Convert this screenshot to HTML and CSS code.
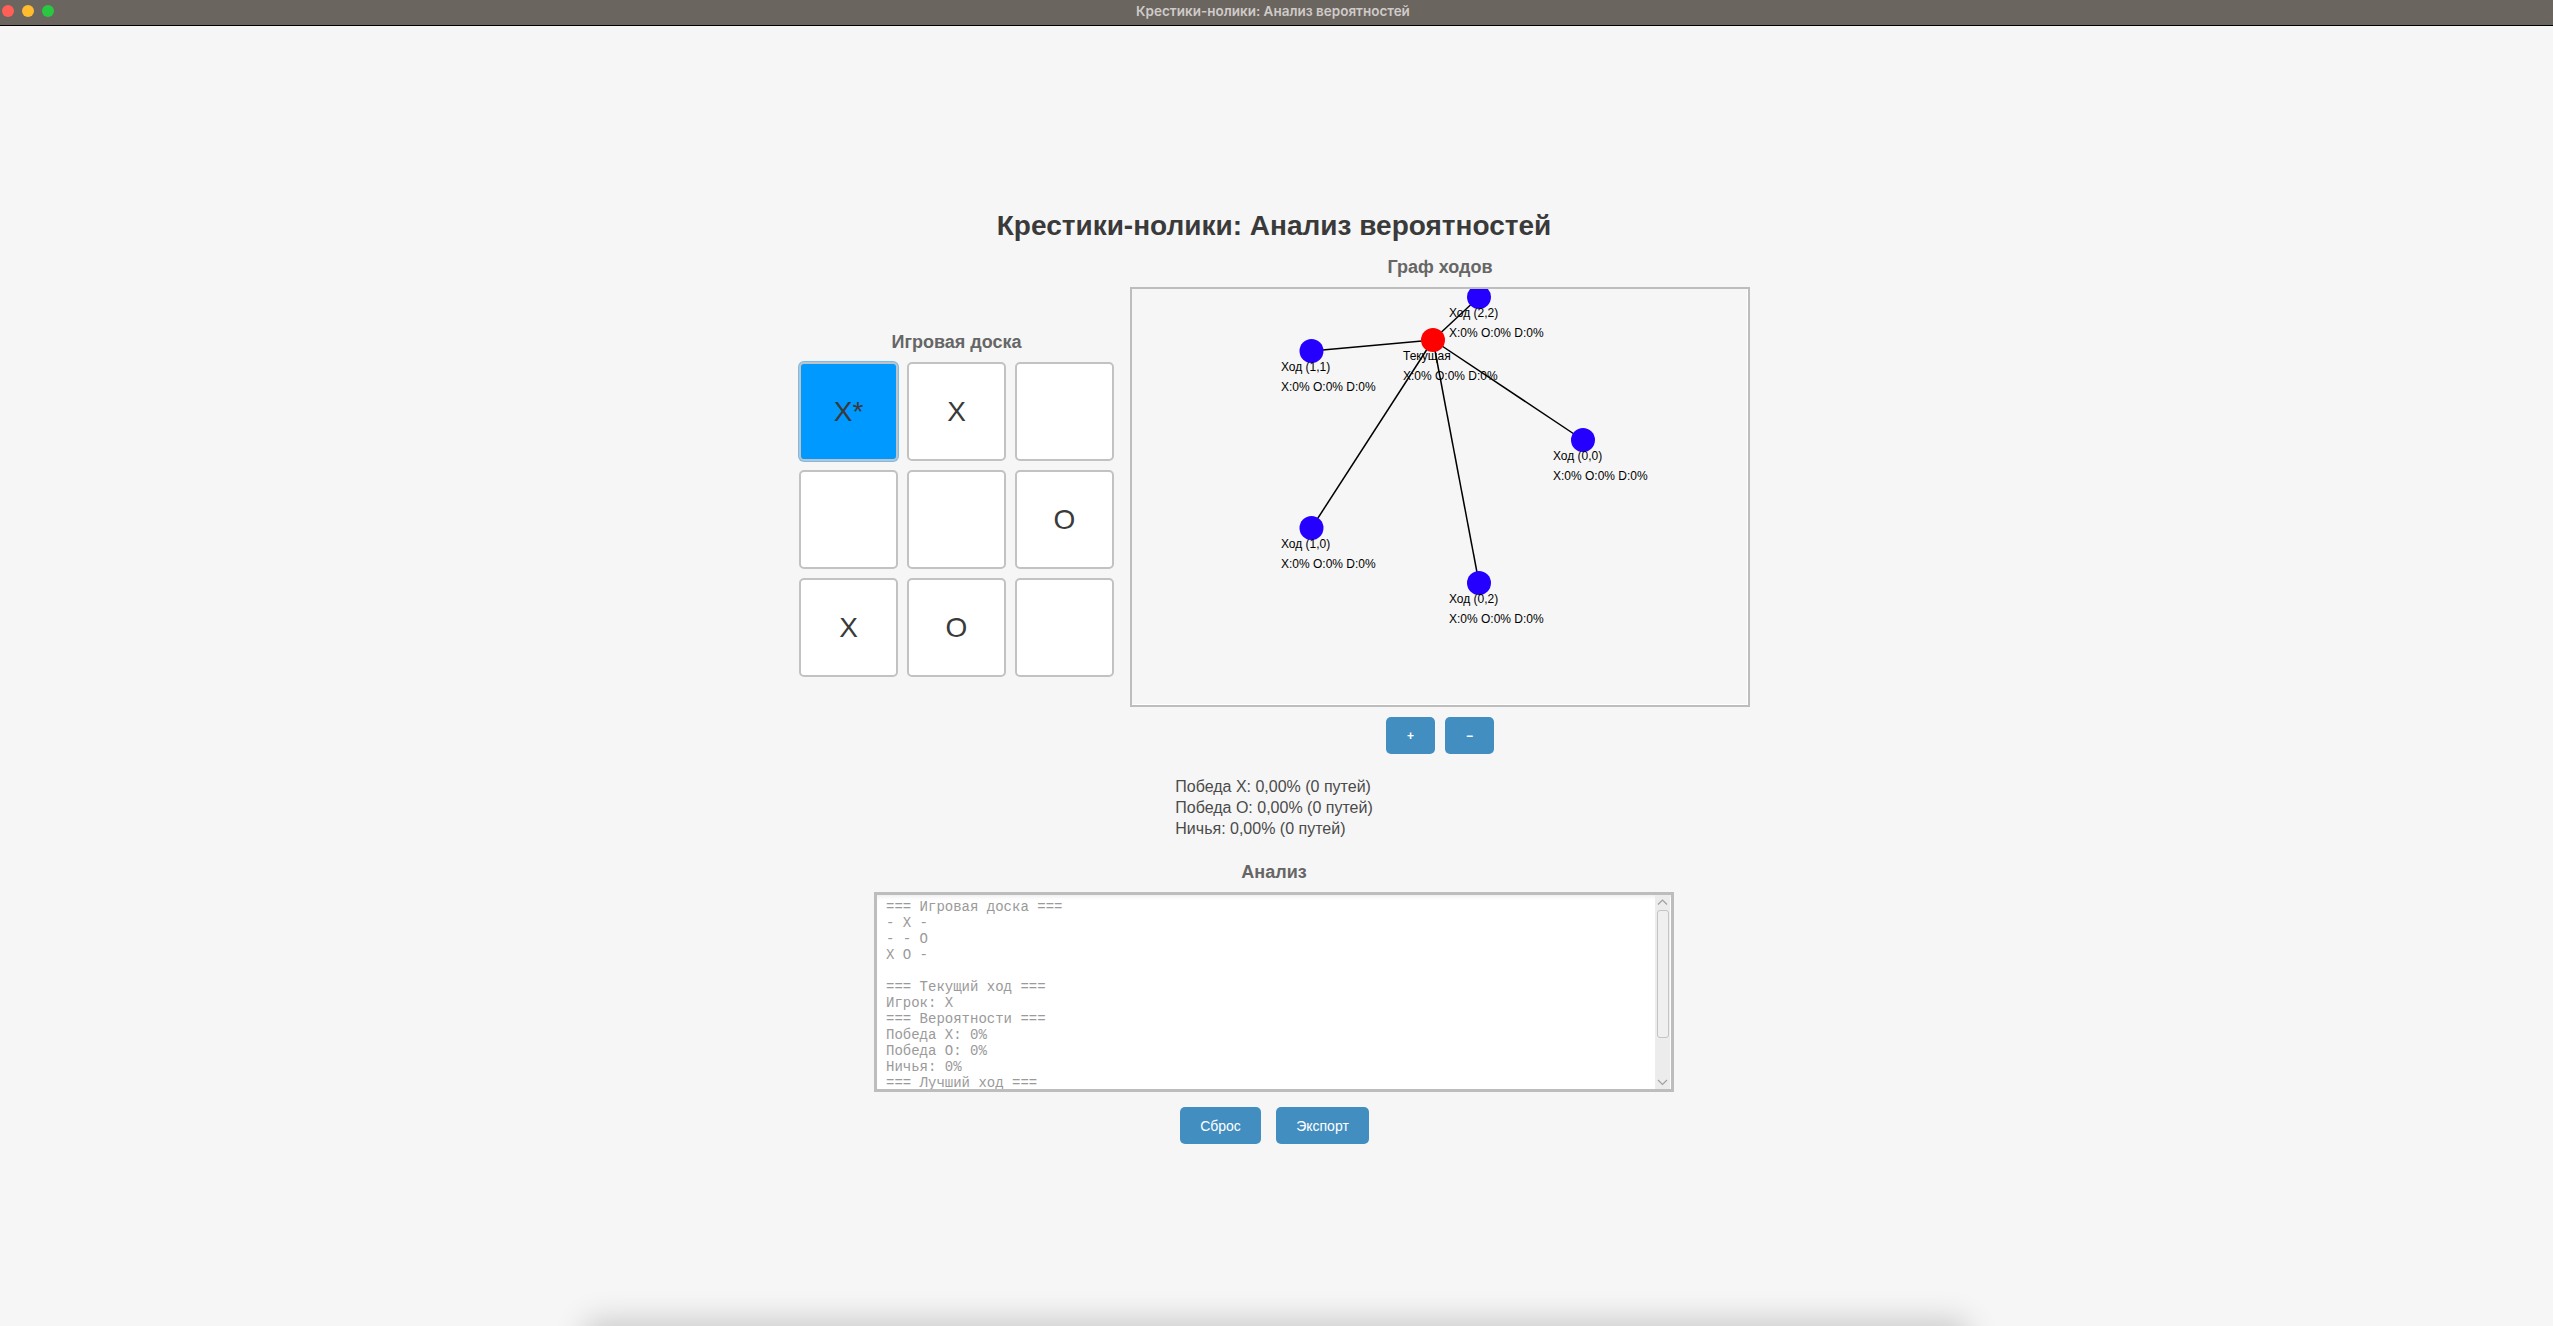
FILE: index.html
```html
<!DOCTYPE html>
<html lang="ru">
	<head>
		<meta charset="utf-8">
		<title>Крестики-нолики: Анализ вероятностей</title>
		<link rel="stylesheet" href="styles.css">
	</head>
	<body>
		<div class="titlebar">
			<div class="lights">
				<span class="light red"></span>
				<span class="light yellow"></span>
				<span class="light green"></span>
			</div>
			<div class="titlebar-text">Крестики-нолики: Анализ вероятностей</div>
		</div>

		<div class="main">
			<h1 class="main-title">Крестики-нолики: Анализ вероятностей</h1>

			<div class="game-row">
				<div class="board-panel">
					<div class="section-label">Игровая доска</div>
					<div class="board">
						<button class="cell selected">X*</button>
						<button class="cell">X</button>
						<button class="cell"></button>
						<button class="cell"></button>
						<button class="cell"></button>
						<button class="cell">O</button>
						<button class="cell">X</button>
						<button class="cell">O</button>
						<button class="cell"></button>
					</div>
				</div>

				<div class="graph-panel">
					<div class="section-label">Граф ходов</div>
					<div class="graph-box">
						<svg class="graph" width="616" height="416" viewBox="0 0 616 416">
							<g class="edges">
								<line x1="301" y1="51" x2="347" y2="8" />
								<line x1="301" y1="51" x2="179.5" y2="62" />
								<line x1="301" y1="51" x2="451" y2="151" />
								<line x1="301" y1="51" x2="179.5" y2="239" />
								<line x1="301" y1="51" x2="347" y2="294" />
							</g>
							<circle class="node-current" cx="301" cy="51" r="12" />
							<circle class="node" cx="347" cy="8" r="12" />
							<circle class="node" cx="179.5" cy="62" r="12" />
							<circle class="node" cx="451" cy="151" r="12" />
							<circle class="node" cx="179.5" cy="239" r="12" />
							<circle class="node" cx="347" cy="294" r="12" />

							<text x="271" y="71">Текущая</text>
							<text x="271" y="91">X:0% O:0% D:0%</text>
							<text x="317" y="28">Ход (2,2)</text>
							<text x="317" y="48">X:0% O:0% D:0%</text>
							<text x="149" y="82">Ход (1,1)</text>
							<text x="149" y="102">X:0% O:0% D:0%</text>
							<text x="421" y="171">Ход (0,0)</text>
							<text x="421" y="191">X:0% O:0% D:0%</text>
							<text x="149" y="259">Ход (1,0)</text>
							<text x="149" y="279">X:0% O:0% D:0%</text>
							<text x="317" y="314">Ход (0,2)</text>
							<text x="317" y="334">X:0% O:0% D:0%</text>
						</svg>
					</div>
					<div class="zoom-buttons">
						<button class="action zoom">+</button>
						<button class="action zoom">−</button>
					</div>
				</div>
			</div>

			<div class="stats">
				<div>Победа X: 0,00% (0 путей)</div>
				<div>Победа O: 0,00% (0 путей)</div>
				<div>Ничья: 0,00% (0 путей)</div>
			</div>

			<div class="section-label analysis-label">Анализ</div>
			<div class="analysis">
				<pre class="analysis-text">=== Игровая доска ===
- X -
- - O
X O -

=== Текущий ход ===
Игрок: X
=== Вероятности ===
Победа X: 0%
Победа O: 0%
Ничья: 0%
=== Лучший ход ===</pre>
				<div class="scrollbar">
					<svg width="15" height="14" viewBox="0 0 15 14"><path d="M3 9.5 L7.5 5 L12 9.5" /></svg>
					<div class="scroll-track"><div class="scroll-thumb"></div></div>
					<svg width="15" height="14" viewBox="0 0 15 14"><path d="M3 5 L7.5 9.5 L12 5" /></svg>
				</div>
			</div>

			<div class="bottom-buttons">
				<button class="action reset">Сброс</button>
				<button class="action export">Экспорт</button>
			</div>
		</div>

		<div class="window-shadow"></div>
	</body>
</html>
```

FILE: styles.css
```css
html, body {
	height: 100%;
}

body {
	margin: 0;
	overflow: hidden;
	background-color: #f6f6f6;
	font-family: "Liberation Sans", Arial, sans-serif;
	color: #333;
}

.titlebar {
	height: 25px;
	border-bottom: 1px solid #000;
	background-color: #6b6560;
	display: flex;
	align-items: center;
	justify-content: center;
	position: relative;
}

.lights {
	position: absolute;
	left: 2px;
	top: 5px;
	display: flex;
	gap: 8px;
}

.light {
	width: 12px;
	height: 12px;
	border-radius: 50%;
}

.light.red {
	background-color: #ff5f57;
}

.light.yellow {
	background-color: #febc2e;
}

.light.green {
	background-color: #28c840;
}

.titlebar-text {
	font-family: Inter, sans-serif;
	font-weight: 600;
	font-size: 13.5px;
	color: #cfcbc8;
	padding-right: 7px;
	margin-top: -3px;
}

.main {
	display: flex;
	flex-direction: column;
	align-items: center;
	padding-right: 4px;
}

.main-title {
	margin: 184px 1px 0 0;
	font-size: 28px;
	line-height: 32px;
	font-weight: bold;
	color: #3a3a3a;
}

.game-row {
	display: flex;
	align-items: center;
	gap: 16px;
	margin-top: 15px;
}

.section-label {
	font-size: 18px;
	line-height: 20px;
	font-weight: bold;
	color: #666;
	text-align: center;
}

.board-panel {
	display: flex;
	flex-direction: column;
	gap: 10px;
	padding-bottom: 2px;
}

.board {
	display: grid;
	grid-template-columns: repeat(3, 99px);
	grid-auto-rows: 99px;
	gap: 9px;
}

.cell {
	border: 2px solid #c2c2c2;
	border-radius: 5px;
	background-color: #fff;
	padding: 0;
	font-family: "Liberation Sans", Arial, sans-serif;
	font-size: 28px;
	color: #3a3a3a;
}

.cell.selected {
	background-color: #0099ff;
	box-shadow: 0 0 0 1px #74bdf0;
}

.graph-panel {
	display: flex;
	flex-direction: column;
	align-items: center;
	gap: 10px;
}

.graph-box {
	width: 616px;
	height: 416px;
	border: 2px solid #bdbdbd;
	box-shadow: inset -1px -1px 0 #fff;
}

.graph {
	display: block;
}

.edges line {
	stroke: #000;
	stroke-width: 1.5;
}

.node {
	fill: #2600ff;
}

.node-current {
	fill: #ff0000;
}

.graph text {
	font-family: "Liberation Sans", Arial, sans-serif;
	font-size: 12px;
	fill: #000;
}

.zoom-buttons {
	display: flex;
	gap: 10px;
}

.action {
	height: 37px;
	border: none;
	border-radius: 5px;
	background-color: #428ec0;
	color: #fff;
	font-family: "Liberation Sans", Arial, sans-serif;
	font-size: 14px;
	padding: 0;
}

.zoom {
	width: 49px;
	font-size: 12px;
	font-weight: bold;
}

.stats {
	margin: 22px 1px 0 0;
	font-size: 16px;
	line-height: 21px;
	color: #4a4a4a;
}

.analysis-label {
	margin: 23px 1px 0 0;
}

.analysis {
	margin: 10px 1px 0 0;
	width: 794px;
	height: 194px;
	border: 3px solid #bdbdbd;
	background-color: #fff;
	box-shadow: inset 0 4px 4px -2px rgba(0, 0, 0, 0.07);
	display: flex;
	overflow: hidden;
}

.analysis-text {
	flex: 1;
	margin: 0;
	padding: 4px 9px;
	font-family: "Liberation Mono", "Courier New", monospace;
	font-size: 14px;
	line-height: 16px;
	color: #9a9a9a;
	overflow: hidden;
}

.scrollbar {
	width: 15px;
	margin-right: 1px;
	background-color: #ececec;
	display: flex;
	flex-direction: column;
	align-items: center;
}

.scrollbar svg {
	flex: none;
	display: block;
}

.scrollbar path {
	fill: none;
	stroke: #a0a0a0;
	stroke-width: 1.2;
}

.scroll-track {
	flex: 1;
	align-self: stretch;
	padding: 1px 1px 0 2px;
}

.scroll-thumb {
	height: 126px;
	border: 1px solid #c4c4c4;
	border-radius: 3px;
	background-color: #efefef;
}

.bottom-buttons {
	margin-top: 15px;
	display: flex;
	gap: 15px;
}

.reset {
	width: 81px;
}

.export {
	width: 93px;
}

.window-shadow {
	position: absolute;
	left: 590px;
	right: 590px;
	top: 1326px;
	height: 40px;
	box-shadow: 0 0 32px 4px rgba(0, 0, 0, 0.2);
}
```
